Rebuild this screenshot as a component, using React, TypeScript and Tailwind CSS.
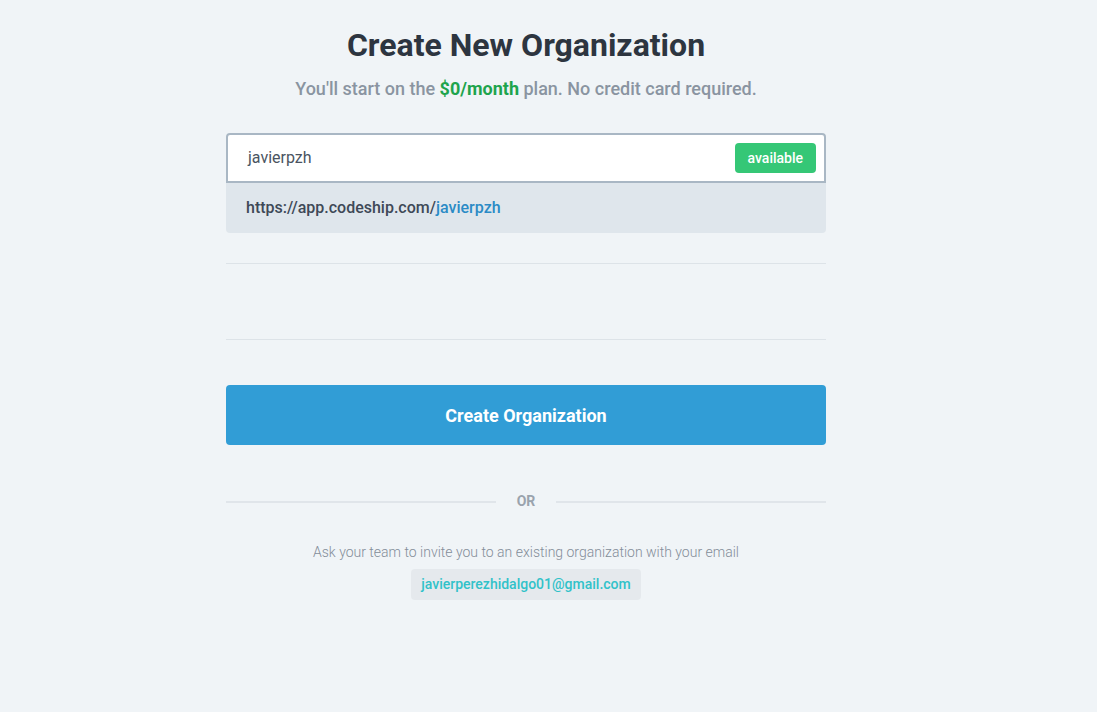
export default function App() {
  const username = "javierpzh";
  return (
    <div
      className="min-h-[712px] w-full bg-[#f0f4f7] pr-[45px]"
      style={{ fontFamily: "Roboto, 'Liberation Sans', sans-serif" }}
    >
      <div className="mx-auto flex w-[600px] flex-col pt-[26px]">
        <h1 className="text-center text-[32px] font-bold leading-[38px] text-[#2d3540]">
          Create New Organization
        </h1>
        <p className="mt-[13px] text-center text-[18px] font-medium leading-[24px] text-[#8a94a1]">
          You'll start on the{" "}
          <span className="font-bold text-[#1ea44d]">$0/month</span> plan. No
          credit card required.
        </p>

        <div className="mt-[32px] flex flex-col">
          <div className="flex h-[50px] items-center rounded-t-[4px] border-2 border-[#a9b7c4] bg-white pl-[20px] pr-[8px]">
            <span className="flex-1 text-[16px] text-[#4a5461]">{username}</span>
            <span className="flex h-[30px] items-center rounded-[4px] bg-[#35c776] px-[13px] text-[14px] font-medium text-white">
              available
            </span>
          </div>
          <div className="flex h-[50px] items-center rounded-b-[4px] bg-[#dfe6ec] px-[20px] text-[16px] font-medium text-[#3e4957]">
            https://app.codeship.com/
            <span className="text-[#2b8bc6]">{username}</span>
          </div>
        </div>

        <div className="mt-[30px] h-px bg-[#dde3e8]" />
        <div className="mt-[75px] h-px bg-[#dde3e8]" />

        <button className="mt-[45px] flex h-[60px] items-center justify-center rounded-[4px] bg-[#319dd6] text-[18px] font-bold text-white">
          Create Organization
        </button>

        <div className="mt-[46px] flex items-center">
          <div className="h-[2px] flex-1 bg-[#e0e5ea]" />
          <span className="w-[60px] text-center text-[14px] font-bold text-[#9aa3ad]">
            OR
          </span>
          <div className="h-[2px] flex-1 bg-[#e0e5ea]" />
        </div>

        <p className="mt-[30px] text-center text-[14px] font-light leading-[20px] text-[#848d99]">
          Ask your team to invite you to an existing organization with your email
        </p>
        <div className="mt-[7px] flex justify-center">
          <span className="flex h-[31px] items-center rounded-[4px] bg-[#e5e9ed] px-[10px] text-[14px] font-medium text-[#31c2c9]">
            javierperezhidalgo01@gmail.com
          </span>
        </div>
      </div>
    </div>
  );
}
